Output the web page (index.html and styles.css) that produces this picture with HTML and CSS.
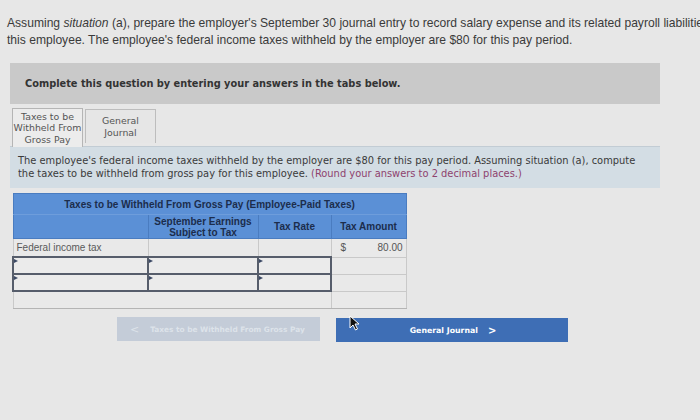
FILE: index.html
```html
<!DOCTYPE html>
<html>
<head>
<meta charset="utf-8">
<link rel="stylesheet" href="styles.css">
</head>
<body>
<div class="intro">
  <div class="line">Assuming <i>situation</i> (a), prepare the employer's September 30 journal entry to record salary expense and its related payroll liabilities</div>
  <div class="line">this employee. The employee's federal income taxes withheld by the employer are $80 for this pay period.</div>
</div>

<div class="instr">Complete this question by entering your answers in the tabs below.</div>

<div class="tabs">
  <div class="tab active">Taxes to be<br>Withheld From<br>Gross Pay</div>
  <div class="tab">General<br>Journal</div>
</div>

<div class="panel">
  The employee's federal income taxes withheld by the employer are $80 for this pay period. Assuming situation (a), compute<br>
  the taxes to be withheld from gross pay for this employee. <span class="round">(Round your answers to 2 decimal places.)</span>
</div>

<table class="grid">
  <colgroup>
    <col class="c1"><col class="c2"><col class="c3"><col class="c4">
  </colgroup>
  <tr class="h1"><th colspan="4">Taxes to be Withheld From Gross Pay (Employee-Paid Taxes)</th></tr>
  <tr class="h2"><th></th><th>September Earnings<br>Subject to Tax</th><th>Tax Rate</th><th>Tax Amount</th></tr>
  <tr class="r1"><td class="lbl">Federal income tax</td><td></td><td></td><td class="amt"><span class="cur">$</span><span>80.00</span></td></tr>
  <tr class="ri"><td class="in"><span class="mark"></span></td><td class="in"><span class="mark"></span></td><td class="in"><span class="mark"></span></td><td class="lt"></td></tr>
  <tr class="ri"><td class="in"><span class="mark"></span></td><td class="in"><span class="mark"></span></td><td class="in"><span class="mark"></span></td><td class="lt"></td></tr>
  <tr class="rl"><td colspan="3" class="lt"></td><td class="lt"></td></tr>
</table>

<div class="nav">
  <div class="btn prev"><span class="chev">&lt;</span>Taxes to be Withheld From Gross Pay</div>
  <div class="btn next">General Journal<span class="chev">&gt;</span>
    <svg class="cursor" width="11" height="16" viewBox="0 0 11 16"><path d="M1 1 L1 13 L4 10 L6.5 15 L8.5 14 L6 9 L10 9 Z" fill="#111" stroke="#fff" stroke-width="1"/></svg>
  </div>
</div>
</body>
</html>
```

FILE: styles.css
```css
html, body {
  margin: 0;
  padding: 0;
}
body {
  background: #e7e7e7;
  width: 700px;
  height: 420px;
  overflow: hidden;
  font-family: "DejaVu Sans", Verdana, sans-serif;
}
.intro {
  padding: 15px 0 0 7px;
  font-family: "Liberation Sans", Arial, sans-serif;
  font-size: 12.1px;
  line-height: 17px;
  color: #3a3a3a;
  white-space: nowrap;
  overflow: hidden;
}
.instr {
  margin: 14px 0 0 10px;
  width: 635px;
  height: 41px;
  padding-left: 15px;
  background: #c9c9c9;
  display: flex;
  align-items: center;
  font-weight: bold;
  font-size: 9.8px;
  color: #333;
}
.tabs {
  display: flex;
  align-items: flex-start;
  gap: 2px;
  margin: 4px 0 0 12px;
}
.tab {
  box-sizing: border-box;
  width: 71px;
  height: 34px;
  margin-top: 1px;
  border: 1px solid #bdbdbd;
  border-bottom: none;
  background: #e6e6e6;
  font-size: 9.4px;
  line-height: 11.5px;
  color: #555;
  text-align: center;
  display: flex;
  align-items: center;
  justify-content: center;
  white-space: nowrap;
}
.tab.active {
  height: 39px;
  margin-top: 0;
  background: #ececec;
  border-color: #b5b5b5;
}
.panel {
  margin: -1px 0 0 10px;
  width: 650px;
  height: 42px;
  box-sizing: border-box;
  padding: 7px 0 0 8px;
  background: #d3dde4;
  border-top: 1px solid #c2ccd4;
  font-size: 9.9px;
  line-height: 13px;
  color: #3a3a3a;
  white-space: nowrap;
}
.round {
  color: #8e426e;
}
.grid {
  margin: 5px 0 0 12px;
  border-collapse: collapse;
  table-layout: fixed;
  width: 393px;
  font-family: "Liberation Sans", Arial, sans-serif;
  font-size: 10px;
}
.c1 { width: 135px; }
.c2 { width: 110px; }
.c3 { width: 73px; }
.c4 { width: 75px; }
.grid th {
  background: #5b90d6;
  color: #1c2d4c;
  font-weight: bold;
  padding: 0;
  border: 1px solid #4a7cc0;
  line-height: 11px;
}
.h1 th {
  height: 20px;
  border-bottom: 1px solid #6e9ddb;
}
.h2 th {
  height: 23px;
}
.grid td {
  padding: 0;
  border: 1px solid #c9c9c9;
  background: #e9e9e9;
  position: relative;
}
.r1 td {
  height: 17px;
}
.lbl {
  color: #5a5a5a;
  padding-left: 3px !important;
}
.amt span {
  color: #555;
}
.amt {
  padding: 0 3px 0 9px !important;
}
.amt .cur {
  float: left;
}
.amt span:last-child {
  float: right;
}
.ri td {
  height: 15px;
}
.grid td.in {
  border: 2px solid #565d6b;
  background: #ebebeb;
}
.mark {
  position: absolute;
  left: 0;
  top: 1px;
  width: 0;
  height: 0;
  border-top: 2.5px solid transparent;
  border-bottom: 2.5px solid transparent;
  border-left: 4px solid #3c4a66;
}
.rl td {
  height: 16px;
  border-bottom: 1px solid #b4b4b4;
}
.nav {
  display: flex;
  align-items: flex-start;
  gap: 16px;
  margin: 8px 0 0 117px;
}
.btn {
  position: relative;
  box-sizing: border-box;
  height: 24px;
  display: flex;
  align-items: center;
  justify-content: center;
  font-weight: bold;
  font-size: 7.8px;
  color: #fff;
  white-space: nowrap;
}
.prev {
  width: 203px;
  background: #c4ccd8;
  color: #dde3ea;
  justify-content: flex-start;
  padding-left: 13px;
  font-size: 7.4px;
}
.prev .chev {
  margin-right: 11px;
  font-weight: normal;
  font-size: 11px;
}
.next {
  width: 232px;
  margin-top: 1px;
  background: #3e6eb5;
  padding-left: 2px;
}
.next .chev {
  margin-left: 10px;
  font-size: 10px;
}
.cursor {
  position: absolute;
  left: 13px;
  top: -3px;
}
```
